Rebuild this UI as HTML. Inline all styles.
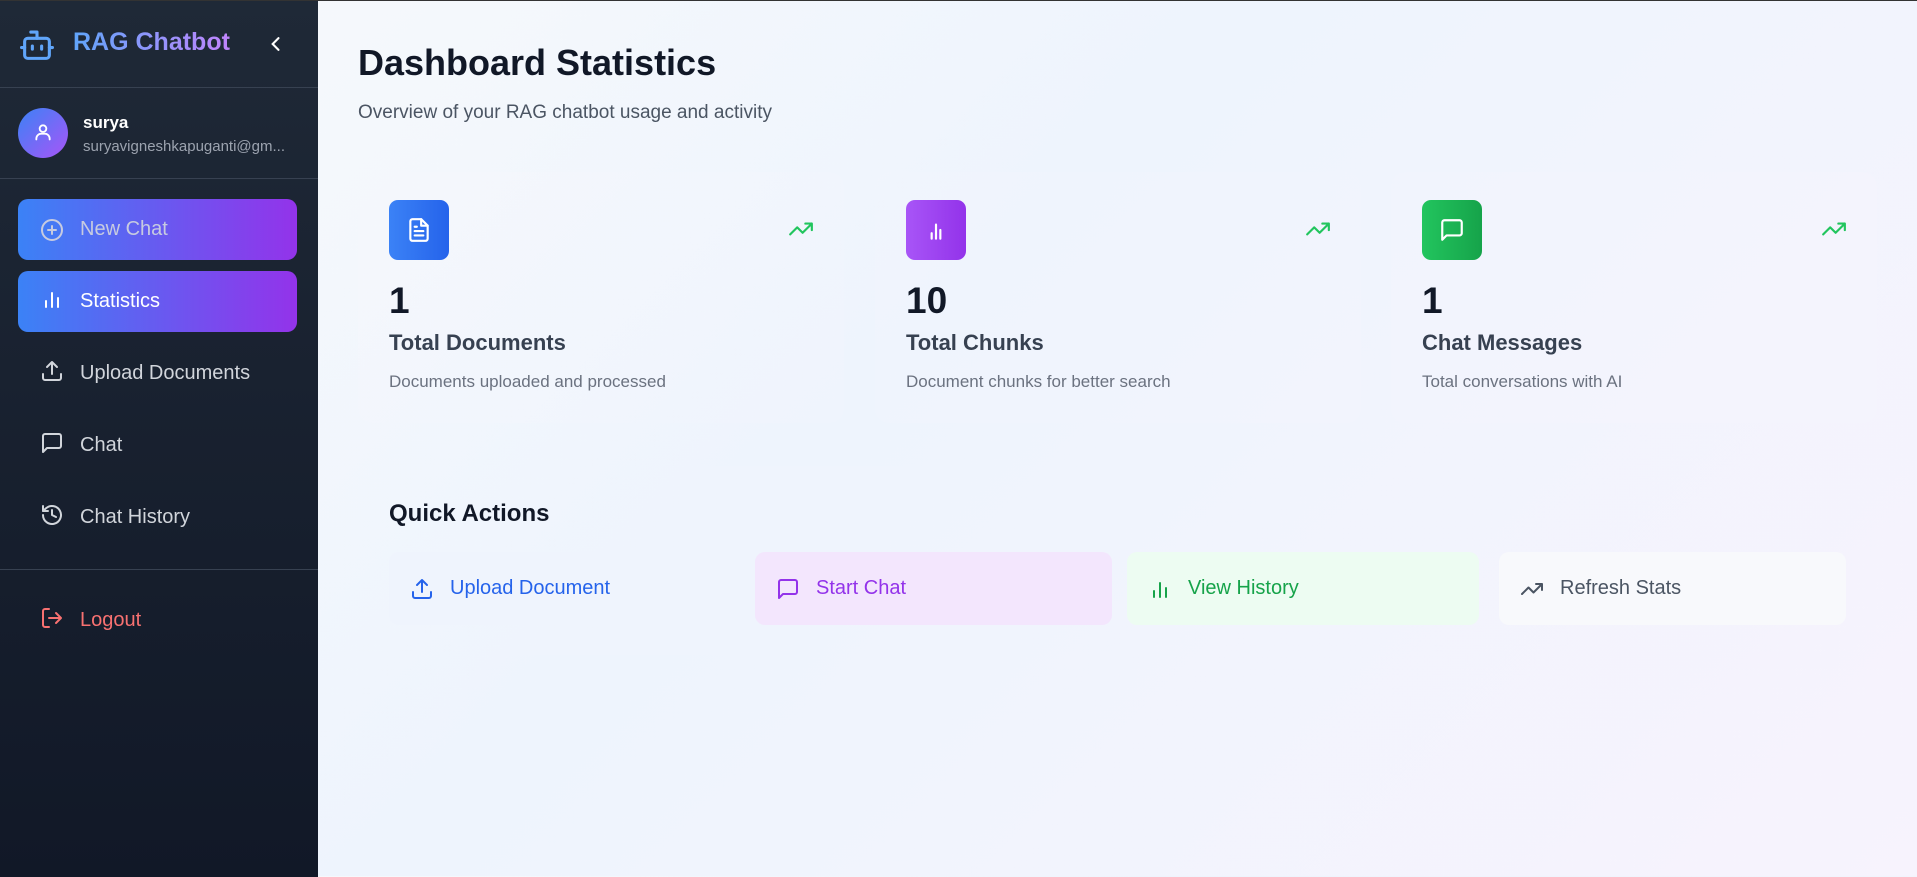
<!DOCTYPE html>
<html><head><meta charset="utf-8"><style>
*{box-sizing:border-box;margin:0;padding:0}
body{width:1917px;height:876px;overflow:hidden;font-family:"Liberation Sans",sans-serif;background:linear-gradient(135deg,#f8fafc 0%,#eef4fd 45%,#f7f3fd 100%);position:relative;border-top:1px solid #333}
.sb{position:absolute;left:0;top:0;width:318px;height:876px;background:linear-gradient(180deg,#1f2937,#111827)}
.abs{position:absolute}
.hr{position:absolute;left:0;width:318px;height:1px;background:#374151}
.nav{position:absolute;left:18px;width:279px;height:61px;border-radius:10px;display:flex;align-items:center;padding-left:22px;font-size:20px;color:#d1d5db}
.nav svg{width:24px;height:24px;margin-right:16px;margin-top:-6px;fill:none;stroke:currentColor;stroke-width:2;stroke-linecap:round;stroke-linejoin:round}
.grad{background:linear-gradient(90deg,#3b82f6,#9333ea)}
.card{position:absolute;top:171px;width:486px;height:251px;border-radius:14px;background:rgba(255,255,255,.08)}
.ib{position:absolute;left:31px;top:28px;width:60px;height:60px;border-radius:9px;display:flex;align-items:center;justify-content:center}
.ib svg{width:26px;height:26px;fill:none;stroke:#fff;stroke-width:2;stroke-linecap:round;stroke-linejoin:round}
.num{position:absolute;left:31px;top:108px;font-size:37px;font-weight:bold;color:#111827}
.lab{position:absolute;left:31px;top:158px;font-size:22px;font-weight:bold;color:#374151}
.desc{position:absolute;left:31px;top:200px;font-size:17px;color:#6b7280}
.tr{position:absolute;left:430px;top:44px;width:26px;height:26px;fill:none;stroke:#22c55e;stroke-width:2;stroke-linecap:round;stroke-linejoin:round}
.qa{position:absolute;top:551px;height:73px;border-radius:10px;display:flex;align-items:center;padding-left:21px;font-size:20px}
.qa svg{width:24px;height:24px;margin-right:16px;fill:none;stroke:currentColor;stroke-width:2;stroke-linecap:round;stroke-linejoin:round}
</style></head><body>
<div class="sb">
<svg class="abs" style="left:18px;top:28px" width="38" height="34" viewBox="0 0 24 22" fill="none" stroke="#60a5fa" stroke-width="2" stroke-linecap="round" stroke-linejoin="round"><path d="M12 6V2H8"/><rect x="4" y="6" width="16" height="13" rx="2"/><path d="M2 12h2M20 12h2M9 11v2M15 11v2"/></svg>
<div class="abs" style="left:73px;top:27px;font-size:25px;font-weight:bold;background:linear-gradient(90deg,#60a5fa,#c084fc);-webkit-background-clip:text;color:transparent">RAG Chatbot</div>
<svg class="abs" style="left:266px;top:32px" width="20" height="22" viewBox="0 0 24 24" fill="none" stroke="#fff" stroke-width="2.5" stroke-linecap="round"><path d="M15 5l-7 7 7 7"/></svg>
<div class="hr" style="top:86px"></div>
<div class="abs" style="left:18px;top:107px;width:50px;height:50px;border-radius:50%;background:linear-gradient(135deg,#3b82f6,#a855f7)"></div>
<svg class="abs" style="left:33px;top:120px" width="20" height="22" viewBox="0 0 24 24" fill="none" stroke="#fff" stroke-width="2.2" stroke-linecap="round"><circle cx="12" cy="8" r="4"/><path d="M4 21v-1a6 6 0 0 1 6-6h4a6 6 0 0 1 6 6v1"/></svg>
<div class="abs" style="left:83px;top:112px;font-size:17px;font-weight:bold;color:#fff">surya</div>
<div class="abs" style="left:83px;top:137px;font-size:15px;color:#9ca3af">suryavigneshkapuganti@gm...</div>
<div class="hr" style="top:177px"></div>
<div class="nav grad" style="top:198px;color:#c7cbe0"><svg viewBox="0 0 24 24" style="margin-top:0"><circle cx="12" cy="12" r="10"/><path d="M12 8v8M8 12h8"/></svg>New Chat</div>
<div class="nav grad" style="top:270px;color:#fff"><svg viewBox="0 0 24 24"><path d="M6 20v-6M12 20V6M18 20v-9"/></svg>Statistics</div>
<div class="nav" style="top:342px"><svg viewBox="0 0 24 24"><path d="M21 15v4a2 2 0 0 1-2 2H5a2 2 0 0 1-2-2v-4M17 8l-5-5-5 5M12 3v12"/></svg>Upload Documents</div>
<div class="nav" style="top:414px"><svg viewBox="0 0 24 24"><path d="M21 15a2 2 0 0 1-2 2H7l-4 4V5a2 2 0 0 1 2-2h14a2 2 0 0 1 2 2z"/></svg>Chat</div>
<div class="nav" style="top:486px"><svg viewBox="0 0 24 24"><path d="M3 12a9 9 0 1 0 3-6.7L3 8"/><path d="M3 3v5h5M12 7v5l4 2"/></svg>Chat History</div>
<div class="hr" style="top:568px"></div>
<div class="nav" style="top:589px;color:#f87171"><svg viewBox="0 0 24 24"><path d="M9 21H5a2 2 0 0 1-2-2V5a2 2 0 0 1 2-2h4M16 17l5-5-5-5M21 12H9"/></svg>Logout</div>
</div>

<div class="abs" style="left:358px;top:41px;font-size:36px;font-weight:bold;color:#111827">Dashboard Statistics</div>
<div class="abs" style="left:358px;top:101px;font-size:19px;color:#4b5563">Overview of your RAG chatbot usage and activity</div>

<div class="card" style="left:358px">
<div class="ib" style="background:linear-gradient(90deg,#3b82f6,#2563eb)"><svg viewBox="0 0 24 24"><path d="M14 2H6a2 2 0 0 0-2 2v16a2 2 0 0 0 2 2h12a2 2 0 0 0 2-2V8z"/><path d="M14 2v6h6M16 13H8M16 17H8M10 9H8"/></svg></div>
<svg class="tr" viewBox="0 0 24 24"><path d="M22 7l-8.5 8.5-5-5L2 17M16 7h6v6"/></svg>
<div class="num">1</div><div class="lab">Total Documents</div><div class="desc">Documents uploaded and processed</div></div>

<div class="card" style="left:875px">
<div class="ib" style="background:linear-gradient(90deg,#a855f7,#9333ea)"><svg viewBox="0 0 24 24"><path d="M8 20v-5M12 20V7M16 20v-8"/></svg></div>
<svg class="tr" viewBox="0 0 24 24"><path d="M22 7l-8.5 8.5-5-5L2 17M16 7h6v6"/></svg>
<div class="num">10</div><div class="lab">Total Chunks</div><div class="desc">Document chunks for better search</div></div>

<div class="card" style="left:1391px">
<div class="ib" style="background:linear-gradient(90deg,#22c55e,#16a34a)"><svg viewBox="0 0 24 24"><path d="M21 15a2 2 0 0 1-2 2H7l-4 4V5a2 2 0 0 1 2-2h14a2 2 0 0 1 2 2z"/></svg></div>
<svg class="tr" viewBox="0 0 24 24"><path d="M22 7l-8.5 8.5-5-5L2 17M16 7h6v6"/></svg>
<div class="num">1</div><div class="lab">Chat Messages</div><div class="desc">Total conversations with AI</div></div>

<div class="abs" style="left:358px;top:465px;width:1519px;height:189px;border-radius:14px;background:rgba(255,255,255,.06)"></div>
<div class="abs" style="left:389px;top:499px;font-size:24px;font-weight:bold;color:#111827">Quick Actions</div>
<div class="qa" style="left:389px;width:349px;background:#eff4fd;color:#2563eb"><svg viewBox="0 0 24 24"><path d="M21 15v4a2 2 0 0 1-2 2H5a2 2 0 0 1-2-2v-4M17 8l-5-5-5 5M12 3v12"/></svg>Upload Document</div>
<div class="qa" style="left:755px;width:357px;background:#f3e6fd;color:#9333ea"><svg viewBox="0 0 24 24"><path d="M21 15a2 2 0 0 1-2 2H7l-4 4V5a2 2 0 0 1 2-2h14a2 2 0 0 1 2 2z"/></svg>Start Chat</div>
<div class="qa" style="left:1127px;width:352px;background:#edfcf2;color:#16a34a"><svg viewBox="0 0 24 24"><path d="M6 20v-6M12 20V6M18 20v-9"/></svg>View History</div>
<div class="qa" style="left:1499px;width:347px;background:#f8f9fc;color:#4b5563"><svg viewBox="0 0 24 24"><path d="M22 7l-8.5 8.5-5-5L2 17M16 7h6v6"/></svg>Refresh Stats</div>
</body></html>
